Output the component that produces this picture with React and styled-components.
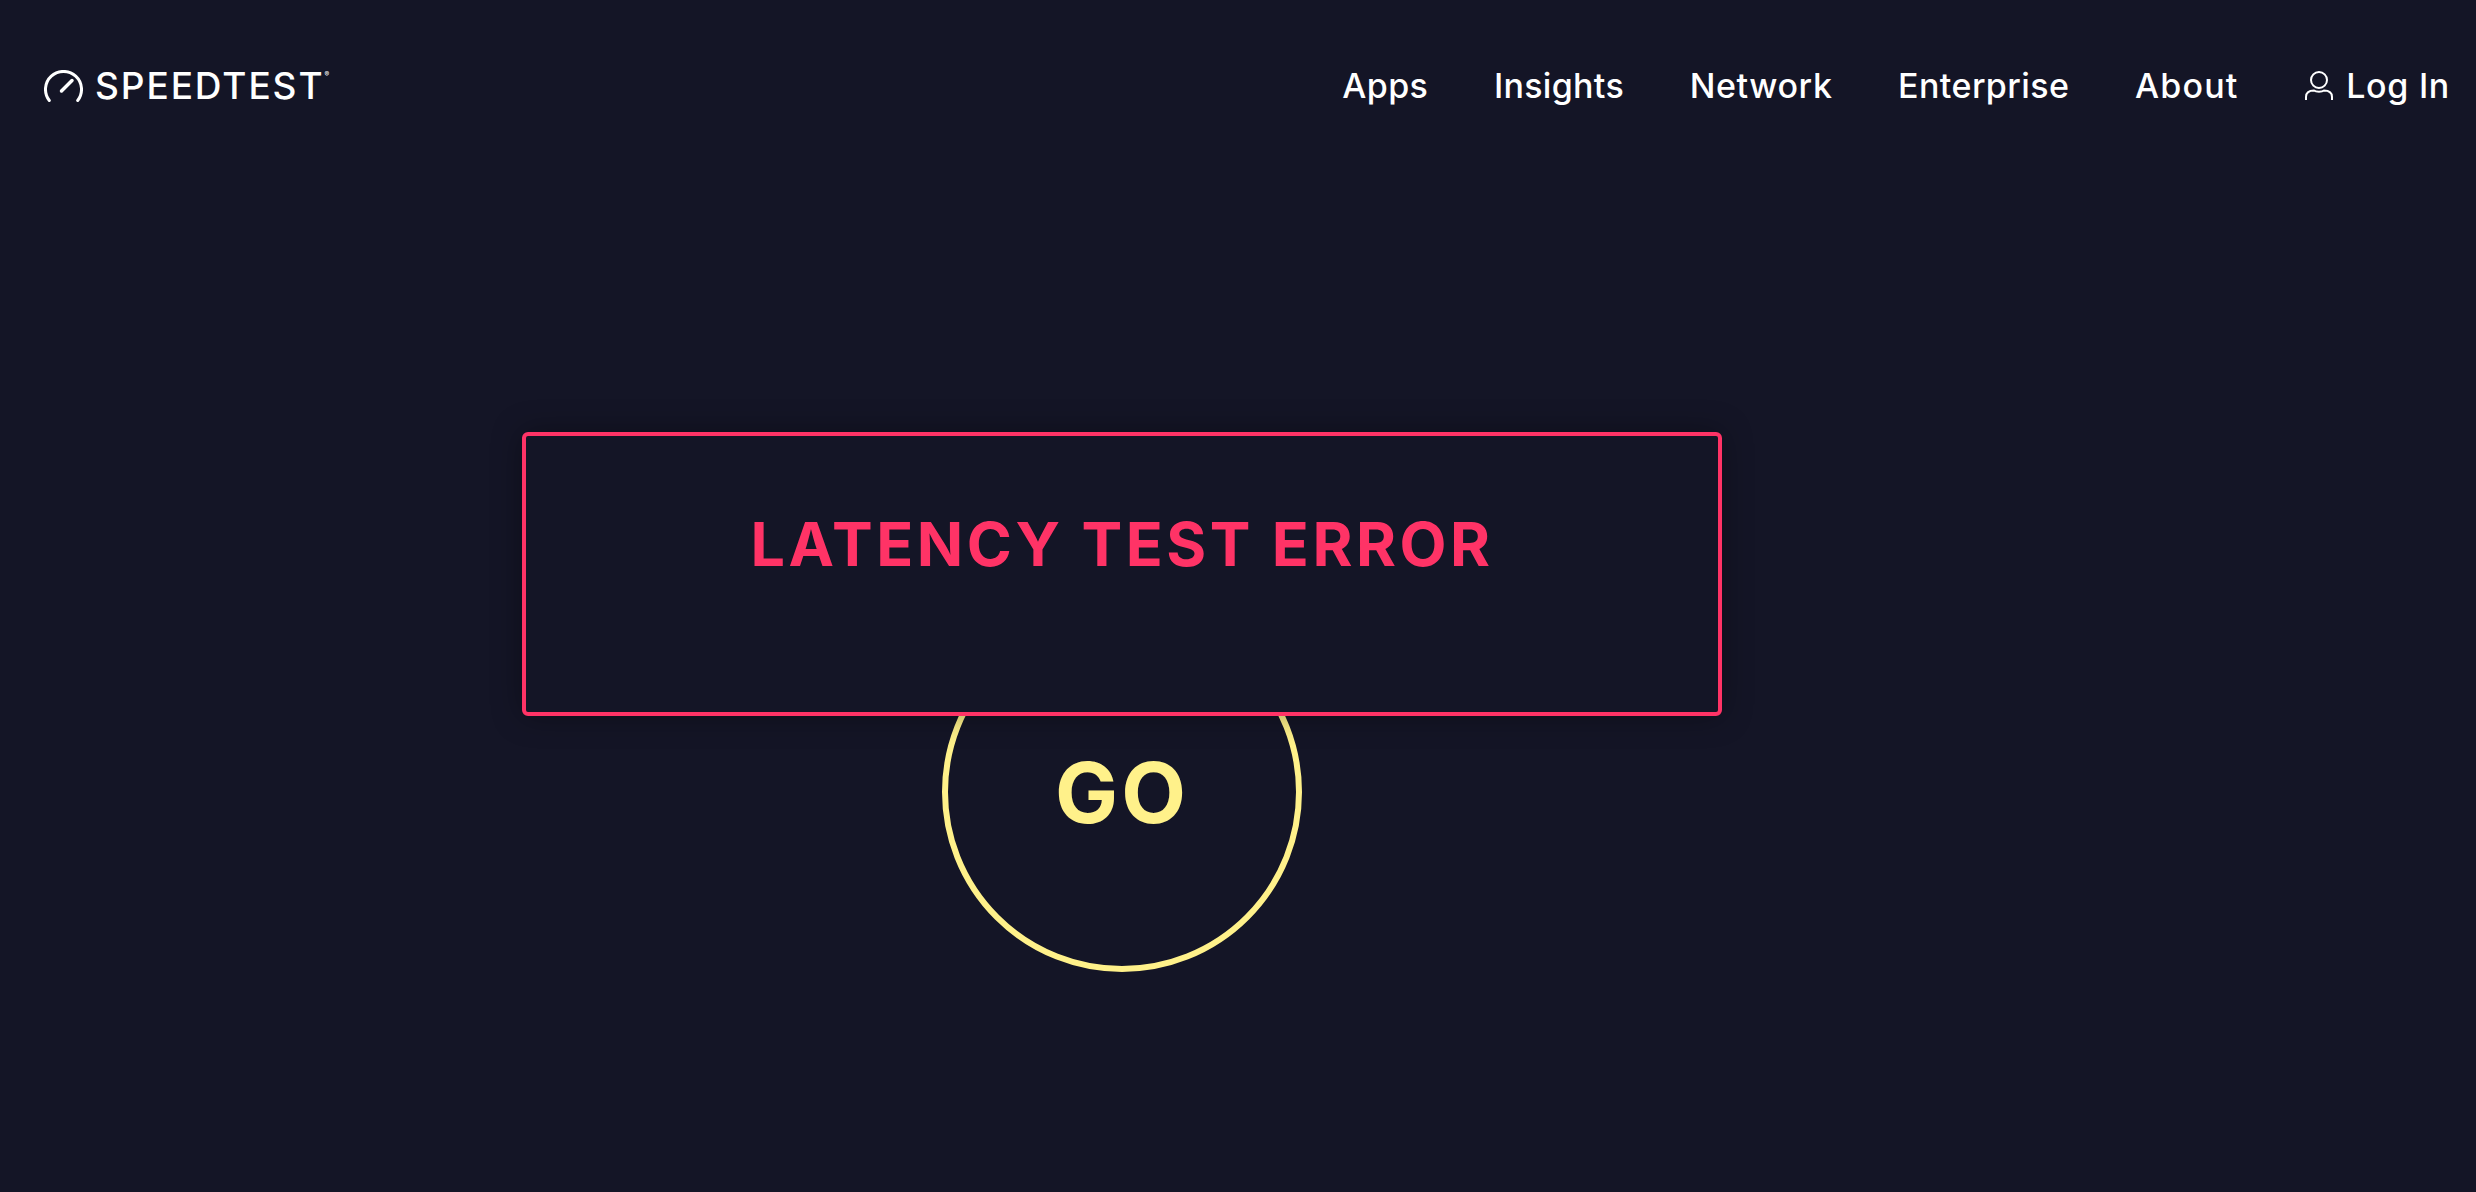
import React from 'react';
import styled, { createGlobalStyle } from 'styled-components';

const GlobalStyle = createGlobalStyle`
  html, body {
    margin: 0;
    padding: 0;
    background-color: #141526;
  }
`;

const Page = styled.div`
  width: 2476px;
  height: 1192px;
  overflow: hidden;
  background-color: #141526;
  font-family: Inter, 'Liberation Sans', sans-serif;
`;

const Header = styled.header`
  height: 172px;
  box-sizing: border-box;
  padding: 0 26px 0 44px;
  display: flex;
  align-items: center;
  justify-content: space-between;
`;

const Logo = styled.a`
  display: flex;
  align-items: center;
  gap: 12px;
  color: #fff;
`;

const LogoText = styled.span`
  font-size: 37px;
  line-height: 40px;
  font-weight: 500;
  letter-spacing: 1.9px;
`;

const Reg = styled.sup`
  font-size: 7px;
  line-height: 7px;
  vertical-align: 22px;
  letter-spacing: 0;
`;

const Nav = styled.nav`
  display: flex;
  align-items: center;
  gap: 65.6px;
`;

const NavLink = styled.a`
  display: flex;
  align-items: center;
  gap: 12px;
  color: #fff;
  font-size: 34px;
  line-height: 40px;
  font-weight: 500;
  letter-spacing: ${(p) => p.$spacing || 0}px;
`;

const Stage = styled.main`
  width: 1200px;
  margin: 260px 0 0 522px;
  display: flex;
  flex-direction: column;
  align-items: center;
`;

const ErrorBox = styled.div`
  position: relative;
  z-index: 1;
  width: 100%;
  height: 284px;
  box-sizing: border-box;
  padding-top: 72px;
  border: 4px solid #ff3366;
  border-radius: 6px;
  background-color: #141526;
  box-shadow: 0 0 30px rgba(0, 0, 0, 0.35);
  text-align: center;
  color: #ff3366;
  font-size: 61px;
  line-height: 72px;
  font-weight: 700;
  letter-spacing: 3.5px;
`;

const GoButton = styled.div`
  width: 360px;
  height: 360px;
  margin-top: -104px;
  box-sizing: border-box;
  border: 6px solid #fff18a;
  border-radius: 50%;
  display: flex;
  align-items: center;
  justify-content: center;
  color: #fff18a;
  font-size: 84px;
  font-weight: 700;
  letter-spacing: 3px;
`;

const GaugeIcon = () => (
  <svg width="39" height="32" viewBox="0 0 39 32" fill="none" stroke="#fff">
    <path d="M5.3 30.5A18 18 0 1 1 33.7 30.5" strokeWidth="3" strokeLinecap="round" />
    <path d="M17.5 21L28 10.5" strokeWidth="3.5" strokeLinecap="round" />
  </svg>
);

const UserIcon = () => (
  <svg width="30" height="30" viewBox="0 0 30 30" fill="none" stroke="#fff" strokeWidth="2">
    <ellipse cx="15" cy="9" rx="8" ry="8" />
    <path d="M2 29V26C2 21 6 19.5 10 19.5C12 21 18 21 20 19.5C24 19.5 28 21 28 26V29" />
  </svg>
);

const App = () => {
  return (
    <Page>
      <GlobalStyle />
      <Header>
        <Logo>
          <GaugeIcon />
          <LogoText>
            SPEEDTEST<Reg>®</Reg>
          </LogoText>
        </Logo>
        <Nav>
          <NavLink $spacing={0.4}>Apps</NavLink>
          <NavLink $spacing={0.3}>Insights</NavLink>
          <NavLink $spacing={0.6}>Network</NavLink>
          <NavLink $spacing={0.4}>Enterprise</NavLink>
          <NavLink $spacing={1.2}>About</NavLink>
          <NavLink $spacing={0.7}>
            <UserIcon />
            Log In
          </NavLink>
        </Nav>
      </Header>
      <Stage>
        <ErrorBox>LATENCY TEST ERROR</ErrorBox>
        <GoButton>GO</GoButton>
      </Stage>
    </Page>
  );
};

export default App;
